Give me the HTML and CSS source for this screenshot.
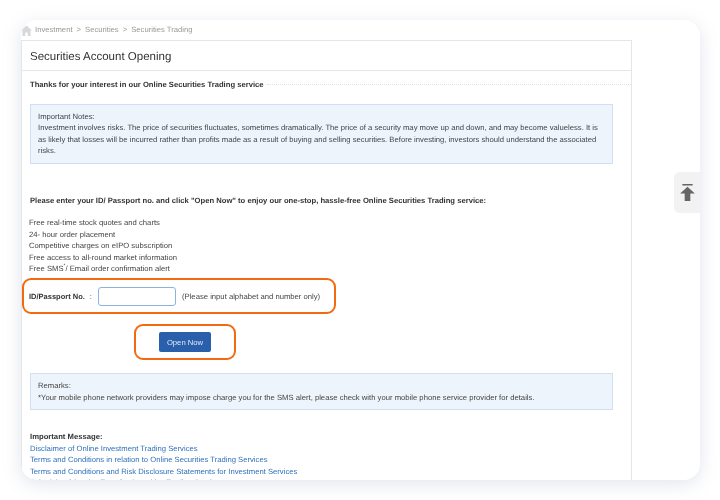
FILE: index.html
```html
<!DOCTYPE html>
<html lang="en">
<head>
  <meta charset="UTF-8">
  <title>Securities Account Opening</title>
  <link rel="stylesheet" href="styles.css">
</head>
<body>
  <div class="frame">
    <nav class="crumbs">
      <svg class="home" viewBox="0 0 12 12"><path d="M6 .5 0 6h1.600v6h3V8.200h2.800V12h3V6H12z"/></svg>
      <span>Investment</span><span class="sep">&gt;</span><span>Securities</span><span class="sep">&gt;</span><span>Securities Trading</span>
    </nav>
    <main class="panel">
      <h1 class="title">Securities Account Opening</h1>
      <div class="body">
        <div class="subhead"><h2>Thanks for your interest in our Online Securities Trading service</h2><span class="dots"></span></div>
        <div class="note note-top">
          Important Notes:<br>
          Investment involves risks. The price of securities fluctuates, sometimes dramatically. The price of a security may move up and down, and may become valueless. It is as likely that losses will be incurred rather than profits made as a result of buying and selling securities. Before investing, investors should understand the associated risks.
        </div>
        <p class="lead">Please enter your ID/ Passport no. and click "Open Now" to enjoy our one-stop, hassle-free Online Securities Trading service:</p>
        <ul class="perks">
          <li>Free real-time stock quotes and charts</li>
          <li>24- hour order placement</li>
          <li>Competitive charges on eIPO subscription</li>
          <li>Free access to all-round market information</li>
          <li>Free SMS<sup>*</sup>/ Email order confirmation alert</li>
        </ul>
        <form class="id-row">
          <label for="idno">ID/Passport No.</label><span class="colon">:</span>
          <input id="idno" type="text">
          <span class="hint">(Please input alphabet and number only)</span>
        </form>
        <div class="btn-ring"><button type="button" class="btn">Open Now</button></div>
        <div class="note note-remarks">
          Remarks:<br>
          *Your mobile phone network providers may impose charge you for the SMS alert, please check with your mobile phone service provider for details.
        </div>
        <div class="message">
          <strong>Important Message:</strong>
          <a href="#">Disclaimer of Online Investment Trading Services</a>
          <a href="#">Terms and Conditions in relation to Online Securities Trading Services</a>
          <a href="#">Terms and Conditions and Risk Disclosure Statements for Investment Services</a>
          <a href="#">Schedule of Service Fees for Securities Trading Services</a>
        </div>
      </div>
    </main>
    <button type="button" class="to-top" aria-label="Back to top">
      <svg viewBox="0 0 16 18"><path d="M2.500 0h11v1.600h-11zM8 2.800 15.800 10H11v8H5v-8H.2z"/></svg>
    </button>
  </div>
</body>
</html>
```

FILE: styles.css
```css
* { margin: 0; padding: 0; box-sizing: border-box; }
html, body { height: 100%; overflow: hidden; }
body { background: #fff; padding: 20px 20px 20px 21px; font-family: "Liberation Sans", Arial, sans-serif; font-size: 7.68px; line-height: 11.4px; color: #444; text-rendering: geometricPrecision; }

.frame { position: relative; height: 460px; background: #fff; border-radius: 16px; overflow: hidden; box-shadow: 0 4px 18px rgba(150, 160, 190, 0.28); }
.frame > * { filter: blur(0.3px); }

.crumbs { height: 20px; display: flex; align-items: center; color: #999; }
.crumbs .home { width: 11px; height: 11px; margin: 1px 3px 0 0; fill: #d8d8d8; flex: none; }
.crumbs .sep { margin: 0 4px; }

.panel { width: 611px; height: 460px; border: 1px solid #e6e6e6; border-bottom: 0; }
.title { height: 30px; border-bottom: 1px solid #e6e6e6; padding: 1px 0 0 8px; font-size: 11.5px; font-weight: 400; line-height: 30px; color: #333; }
.body { padding: 0 18px 0 8px; }

.subhead { display: flex; align-items: center; height: 13px; margin: 7px -18px 0 0; }
.subhead h2 { font-size: 7.65px; font-weight: 700; color: #333; white-space: nowrap; }
.dots { flex: 1; margin-left: 3px; border-top: 1px dotted #e2e2e2; }

.note { background: #edf4fb; border: 1px solid #cfe0f4; padding: 6px 7px; }
.note-top { margin-top: 13px; height: 60px; }
.note-remarks { margin-top: 13px; height: 37px; }

.lead { margin-top: 31px; font-size: 7.65px; font-weight: 700; color: #333; white-space: nowrap; }
.perks { list-style: none; margin: 11px 0 0 -1px; }
.perks sup { font-size: 5px; line-height: 0; }

.id-row { display: flex; align-items: center; height: 36px; width: 314px; margin: 4px 0 0 -8px; padding-left: 5px; border: 2px solid #f26a10; border-radius: 9px; }
.id-row label { font-size: 7.5px; font-weight: 700; color: #333; white-space: nowrap; }
.colon { margin: 0 6px 0 5px; }
.id-row input { width: 78px; height: 19px; border: 1px solid #8fb2dc; border-radius: 3px; background: #fff; margin-right: 6px; }
.hint { white-space: nowrap; }
.btn-ring { display: flex; align-items: center; justify-content: center; width: 102px; height: 36px; margin: 10px 0 0 104px; border: 2px solid #f26a10; border-radius: 9px; }
.btn { width: 52px; height: 20px; background: #2a60ab; color: #dfe8f5; border: 0; border-radius: 2px; font-family: inherit; font-size: 7.68px; }

.message { margin-top: 21px; display: flex; flex-direction: column; }
.message strong { color: #333; }
.message a { color: #2f70ba; text-decoration: none; white-space: nowrap; }

.to-top { position: absolute; top: 152px; right: 0; width: 26px; height: 41px; background: #f2f2f2; border: 0; border-radius: 6px 0 0 6px; display: flex; align-items: center; justify-content: center; }
.to-top svg { width: 15px; height: 17px; fill: #666; }
```
